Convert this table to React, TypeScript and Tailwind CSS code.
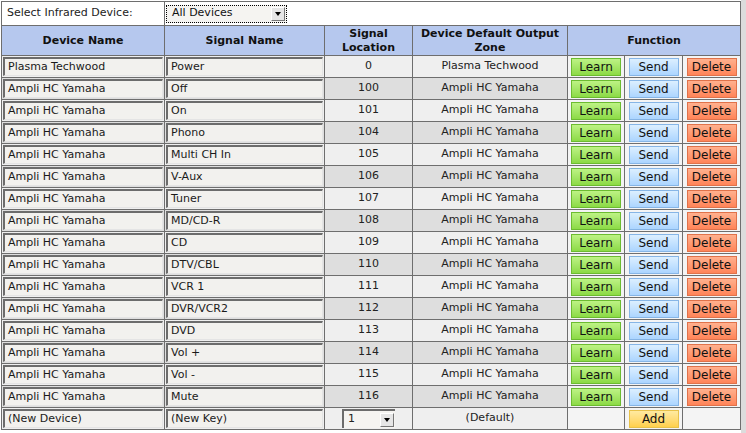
import React from 'react'

const signals: [string, string, number][] = [
    ['Plasma Techwood', 'Power', 0],
    ['Ampli HC Yamaha', 'Off', 100],
    ['Ampli HC Yamaha', 'On', 101],
    ['Ampli HC Yamaha', 'Phono', 104],
    ['Ampli HC Yamaha', 'Multi CH In', 105],
    ['Ampli HC Yamaha', 'V-Aux', 106],
    ['Ampli HC Yamaha', 'Tuner', 107],
    ['Ampli HC Yamaha', 'MD/CD-R', 108],
    ['Ampli HC Yamaha', 'CD', 109],
    ['Ampli HC Yamaha', 'DTV/CBL', 110],
    ['Ampli HC Yamaha', 'VCR 1', 111],
    ['Ampli HC Yamaha', 'DVR/VCR2', 112],
    ['Ampli HC Yamaha', 'DVD', 113],
    ['Ampli HC Yamaha', 'Vol +', 114],
    ['Ampli HC Yamaha', 'Vol -', 115],
    ['Ampli HC Yamaha', 'Mute', 116],
]

const cell = 'border border-[#6e6e6e] p-0'

const Field = ({ text }: { text: string }) => (
    <div className="mx-[1px] h-[19px] border-t-2 border-l-2 border-r border-b border-t-[#6c6c6c] border-l-[#6c6c6c] border-r-[#e4e4e4] border-b-[#e4e4e4] bg-[#f2f1ee] pl-[3px] text-[11px] leading-[16px] text-[#1a1a1a] whitespace-nowrap overflow-hidden">
        {text}
    </div>
)

const Btn = ({ label, tone }: { label: string; tone: string }) => (
    <div className="flex justify-center">
        <div className={`w-[50px] h-[18px] border text-center text-[12px] leading-[16px] text-[#111] ${tone}`}>{label}</div>
    </div>
)

const learn = 'border-[#6cbc30] bg-gradient-to-b from-[#bdf284] to-[#8cda45]'
const send = 'border-[#86b5e6] bg-gradient-to-b from-[#dcefff] to-[#acd5ff]'
const del = 'border-[#e0724a] bg-gradient-to-b from-[#ffb08e] to-[#ff8458]'
const add = 'border-[#e8c24a] bg-gradient-to-b from-[#ffeaa0] to-[#ffd04a]'

const Arrow = () => (
    <span className="w-[14px] h-[14px] mr-[1px] border border-t-white border-l-white border-r-[#777] border-b-[#777] bg-[#e6e6e6] flex items-center justify-center">
        <span className="w-0 h-0 border-l-[3px] border-r-[3px] border-t-[4px] border-l-transparent border-r-transparent border-t-black" />
    </span>
)

export default function App() {
    return (
        <div className="w-[746px] h-[433px] bg-white font-['DejaVu_Sans',Verdana,sans-serif] flex">
            <div className="w-[741px] pl-[1px] pt-[1px]">
                <table className="w-[740px] border-collapse table-fixed">
                    <colgroup>
                        <col className="w-[163px]" />
                        <col className="w-[160px]" />
                        <col className="w-[88px]" />
                        <col className="w-[155px]" />
                        <col className="w-[57px]" />
                        <col className="w-[58px]" />
                        <col className="w-[58px]" />
                    </colgroup>
                    <tbody>
                        <tr className="h-[24px]">
                            <td className={`${cell} pl-[5px] text-[11px] text-[#222]`}>Select Infrared Device:</td>
                            <td colSpan={6} className={`${cell} bg-white`}>
                                <div className="ml-[1px] w-[121px] h-[18px] flex items-center bg-[#f5f4f1] border border-dotted border-black">
                                    <span className="flex-1 pl-[5px] text-[11px] text-[#111]">All Devices</span>
                                    <Arrow />
                                </div>
                            </td>
                        </tr>
                        <tr className="h-[30px] bg-[#b6c8ee] text-[11px] font-bold text-[#111] leading-[14px]">
                            <td className={`${cell} text-center`}>Device Name</td>
                            <td className={`${cell} text-center`}>Signal Name</td>
                            <td className={`${cell} text-center`}>Signal<br />Location</td>
                            <td className={`${cell} text-center`}>Device Default Output<br />Zone</td>
                            <td colSpan={3} className={`${cell} text-center`}>Function</td>
                        </tr>
                        {signals.map(([device, name, loc], i) => (
                            <tr key={i} className={`h-[22px] text-[11px] text-[#222] ${i % 2 === 0 ? 'bg-[#efefef]' : 'bg-[#dedede]'}`}>
                                <td className={cell}><Field text={device} /></td>
                                <td className={cell}><Field text={name} /></td>
                                <td className={`${cell} text-center`}>{loc}</td>
                                <td className={`${cell} text-center`}>{device}</td>
                                <td className={`${cell} bg-[#f4f4f4]`}><Btn label="Learn" tone={learn} /></td>
                                <td className={`${cell} bg-[#f4f4f4]`}><Btn label="Send" tone={send} /></td>
                                <td className={`${cell} bg-[#f4f4f4]`}><Btn label="Delete" tone={del} /></td>
                            </tr>
                        ))}
                        <tr className="h-[22px] text-[11px] text-[#222] bg-[#efefef]">
                            <td className={cell}><Field text="(New Device)" /></td>
                            <td className={cell}><Field text="(New Key)" /></td>
                            <td className={cell}>
                                <div className="ml-[17px] w-[53px] h-[19px] flex items-center bg-[#f5f4f1] border-t-2 border-l-2 border-t-[#6c6c6c] border-l-[#6c6c6c]">
                                    <span className="flex-1 pl-[4px]">1</span>
                                    <Arrow />
                                </div>
                            </td>
                            <td className={`${cell} text-center`}>(Default)</td>
                            <td className={`${cell} bg-[#f4f4f4]`}></td>
                            <td className={`${cell} bg-[#f4f4f4]`}><Btn label="Add" tone={add} /></td>
                            <td className={`${cell} bg-[#f4f4f4]`}></td>
                        </tr>
                    </tbody>
                </table>
            </div>
            <div className="flex-1 bg-[#dcdcdc]" />
        </div>
    )
}
